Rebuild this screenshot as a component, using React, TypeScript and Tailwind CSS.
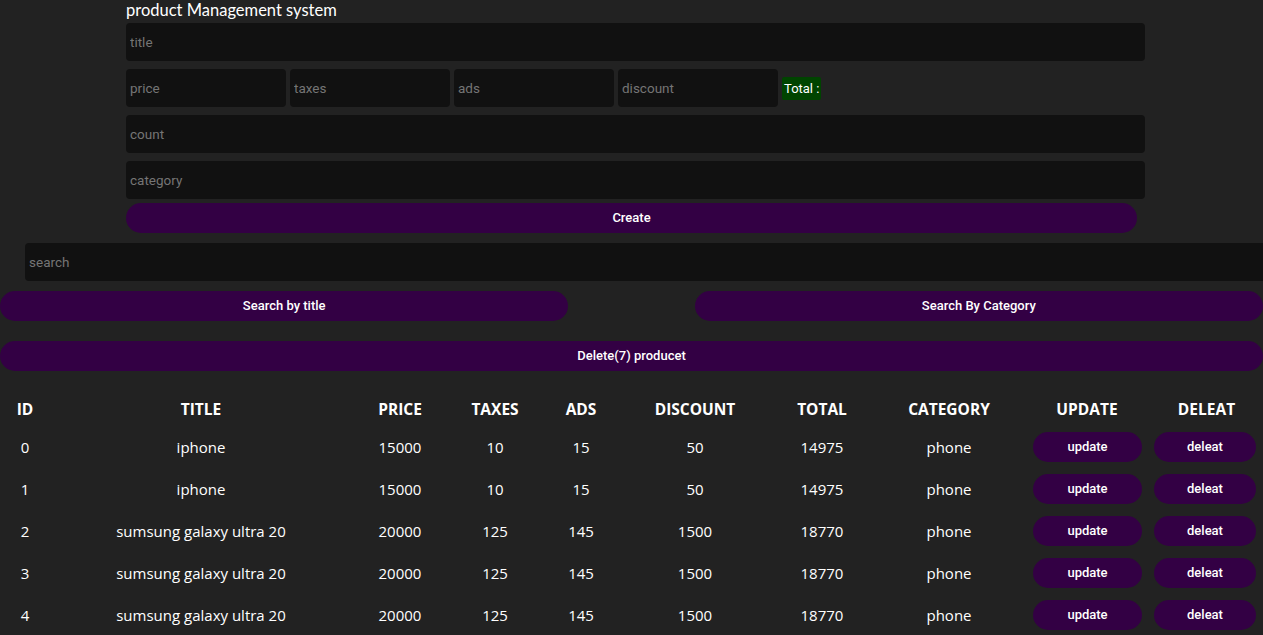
import React from 'react';

type Product = {
  id: number;
  title: string;
  price: number;
  taxes: number;
  ads: number;
  discount: number;
  total: number;
  category: string;
};

const products: Product[] = [
  { id: 0, title: 'iphone', price: 15000, taxes: 10, ads: 15, discount: 50, total: 14975, category: 'phone' },
  { id: 1, title: 'iphone', price: 15000, taxes: 10, ads: 15, discount: 50, total: 14975, category: 'phone' },
  { id: 2, title: 'sumsung galaxy ultra 20', price: 20000, taxes: 125, ads: 145, discount: 1500, total: 18770, category: 'phone' },
  { id: 3, title: 'sumsung galaxy ultra 20', price: 20000, taxes: 125, ads: 145, discount: 1500, total: 18770, category: 'phone' },
  { id: 4, title: 'sumsung galaxy ultra 20', price: 20000, taxes: 125, ads: 145, discount: 1500, total: 18770, category: 'phone' },
  { id: 5, title: 'sumsung galaxy ultra 20', price: 20000, taxes: 125, ads: 145, discount: 1500, total: 18770, category: 'phone' },
  { id: 6, title: 'sumsung galaxy ultra 20', price: 20000, taxes: 125, ads: 145, discount: 1500, total: 18770, category: 'phone' },
];

const inputCls =
  "h-[38px] rounded-[4px] bg-[#111111] px-[4px] text-[13.5px] text-white outline-none placeholder:text-[#757575] [font-family:Roboto,'Liberation_Sans',Arial,sans-serif]";

const btnCls =
  "h-[30px] rounded-full bg-[#330044] text-[13px] font-medium text-white [font-family:Roboto,'Liberation_Sans',Arial,sans-serif]";

const App = () => {
  return (
    <div className="min-h-screen w-full overflow-hidden bg-[#222222] text-white [font-family:'Open_Sans','Noto_Sans',sans-serif]">
      <div className="ml-[126px] flex w-[1019px] flex-col">
        <h2 className="h-[20px] text-[16.5px] leading-[20px] [font-family:Lato,'Open_Sans',sans-serif]">
          product Management system
        </h2>
        <input className={`mt-[3px] w-full ${inputCls}`} placeholder="title" />
        <div className="mt-[8px] flex items-center gap-[4px]">
          <input className={`w-[160px] ${inputCls}`} placeholder="price" />
          <input className={`w-[160px] ${inputCls}`} placeholder="taxes" />
          <input className={`w-[160px] ${inputCls}`} placeholder="ads" />
          <input className={`w-[160px] ${inputCls}`} placeholder="discount" />
          <small className="rounded-[2px] bg-[#004400] px-[2px] py-[3px] text-[13px] leading-[17px] [font-family:Roboto,'Liberation_Sans',Arial,sans-serif]">
            Total :
          </small>
        </div>
        <input className={`mt-[8px] w-full ${inputCls}`} placeholder="count" />
        <input className={`mt-[8px] w-full ${inputCls}`} placeholder="category" />
        <button className={`mt-[4px] w-[1011px] ${btnCls}`}>Create</button>
      </div>

      <div className="mt-[10px] flex">
        <input className={`ml-[25px] w-full shrink-0 ${inputCls}`} placeholder="search" />
      </div>
      <div className="mt-[10px] flex justify-between">
        <button className={`w-[45%] ${btnCls}`}>Search by title</button>
        <button className={`w-[45%] ${btnCls}`}>Search By Category</button>
      </div>
      <div className="mt-[20px]">
        <button className={`w-full ${btnCls}`}>Delete(7) producet</button>
      </div>

      <table className="mt-[20px] w-full table-fixed text-center text-[15px]">
        <colgroup>
          <col className="w-[50px]" />
          <col className="w-[302px]" />
          <col className="w-[96px]" />
          <col className="w-[94px]" />
          <col className="w-[78px]" />
          <col className="w-[150px]" />
          <col className="w-[104px]" />
          <col className="w-[150px]" />
          <col className="w-[126px]" />
          <col className="w-[113px]" />
        </colgroup>
        <thead>
          <tr className="h-[36px] text-[15.5px] font-bold uppercase">
            <th className="pt-[2px]">id</th>
            <th className="pt-[2px]">title</th>
            <th className="pt-[2px]">price</th>
            <th className="pt-[2px]">taxes</th>
            <th className="pt-[2px]">ads</th>
            <th className="pt-[2px]">discount</th>
            <th className="pt-[2px]">total</th>
            <th className="pt-[2px]">category</th>
            <th className="pt-[2px]">update</th>
            <th className="pt-[2px]">deleat</th>
          </tr>
        </thead>
        <tbody>
          {products.map((p) => (
            <tr key={p.id} className="h-[42px]">
              <td className="pb-[2px]">{p.id}</td>
              <td className="pb-[2px]">{p.title}</td>
              <td className="pb-[2px]">{p.price}</td>
              <td className="pb-[2px]">{p.taxes}</td>
              <td className="pb-[2px]">{p.ads}</td>
              <td className="pb-[2px]">{p.discount}</td>
              <td className="pb-[2px]">{p.total}</td>
              <td className="pb-[2px]">{p.category}</td>
              <td className="pb-[2px]">
                <button className={`ml-[9px] block w-[109px] ${btnCls}`}>update</button>
              </td>
              <td className="pb-[2px]">
                <button className={`ml-[4px] block w-[102px] ${btnCls}`}>deleat</button>
              </td>
            </tr>
          ))}
        </tbody>
      </table>
    </div>
  );
};

export default App;
